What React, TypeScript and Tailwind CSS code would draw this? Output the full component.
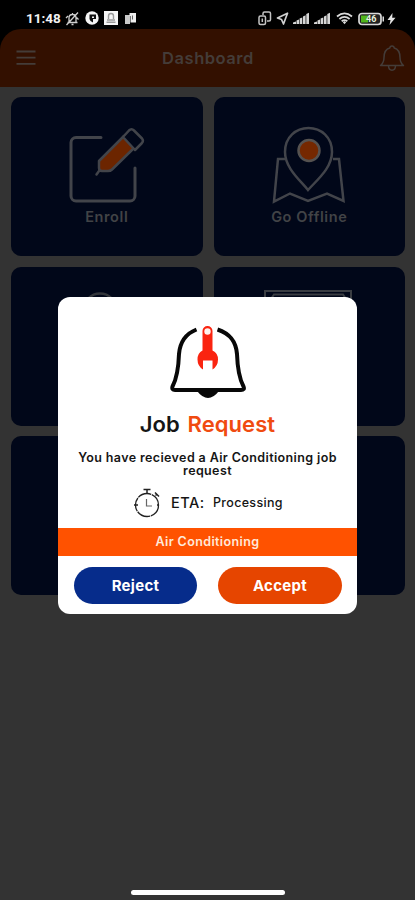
import type { ReactNode } from "react";

const Signal = () => (
    <svg width="17" height="13" viewBox="0 0 17 13" fill="#d6d6d6">
        <path d="M0 12V10.5L3 9.5V12zM3.500 12V8.500L6 7.500V12zM6.600 12V6.500L9.300 5.500V12zM10 12V4.500L12.600 3.300V12zM13.300 12V2L16 0.800V12z" />
    </svg>
)

const StatusBar = () => (
    <div className="flex h-[29px] items-end justify-between pr-[19px] pb-[3px] pl-[26px]">
        <div className="flex items-center">
            <span className="w-[35px] font-['Roboto'] text-[13.5px] leading-4 font-bold text-[#f2f2f2]">11:48</span>
            {/* muted bell */}
            <svg className="ml-[4px]" width="15" height="15" viewBox="0 0 15 15" fill="none" stroke="#cfcfcf" strokeWidth="1.3">
                <path d="M2.500 11.500h10M4 11.500V7c0-2 1.500-3.500 3.500-3.500S11 5 11 7v4.500M6.500 13.500h2M1.500 14L13 1.500M7.500 3.500V2M1 7l2-2M13.500 8.500l-2-2" />
            </svg>
            <svg className="ml-[5px]" width="14" height="14" viewBox="0 0 14 14">
                <circle cx="7" cy="7" r="6.700" fill="#f5f5f5" />
                <path d="M4.500 3.500H11V8H8v3.500A4.500 4.500 0 0 1 4.500 8z" fill="#111" />
                <path d="M7 5.500h2v1.500H7z" fill="#f5f5f5" />
            </svg>
            <svg className="ml-[5px]" width="14" height="14" viewBox="0 0 14 14">
                <path d="M0 0h14v14H0z" fill="#f5f5f5" />
                <path d="M4.500 8V5a2.500 2.500 0 0 1 5 0v3M3 9h8M2.500 11.200h9" fill="none" stroke="#999" strokeWidth="1.400" />
            </svg>
            <svg className="ml-[7px]" width="12" height="13" viewBox="0 0 12 13">
                <path d="M0 3h5v9H0z" fill="#c9c9c9" />
                <path d="M4.500 1h6.500v9.500H5.500V4h-1z" fill="#eee" />
                <path d="M7.500 3.500v4" stroke="#666" />
            </svg>
        </div>
        <div className="flex items-center">
            <svg width="14" height="15" viewBox="0 0 14 15" fill="none" stroke="#c4c4c4" strokeWidth="1.500">
                <path d="M5 4V2.500Q5 1 6.500 1H11Q12.500 1 12.500 2.500V8.500Q12.500 10 11 10H9" />
                <rect x="1" y="5" width="6.500" height="8.500" rx="1.500" />
                <path d="M4.300 7.500v3.500" />
            </svg>
            <svg className="ml-[4px]" width="13" height="13" viewBox="0 0 13 13" fill="none" stroke="#d0d0d0" strokeWidth="1.700">
                <path d="M11.500 1.200L1.500 6l4 1.500L7.500 12z" strokeLinejoin="round" />
            </svg>
            <div className="ml-[4px] flex gap-[4px]">
                <Signal />
                <Signal />
            </div>
            <svg className="ml-[5px]" width="17" height="13" viewBox="0 0 17 13" fill="none" stroke="#dadada" strokeWidth="1.800">
                <path d="M1 4.500Q8.500-1.800 16 4.500M3.400 7Q8.500 2.700 13.600 7M5.700 9.300Q8.500 7 11.300 9.300" />
                <path d="M8.500 9l-1.700 1.200 1.700 2 1.700-2z" fill="#dadada" stroke="none" />
            </svg>
            <svg className="ml-[5px]" width="27" height="14" viewBox="0 0 27 14">
                <rect x="1" y="1.500" width="22" height="11" rx="3" fill="#222" stroke="#d9d9d9" strokeWidth="1.700" />
                <path d="M3 3.500h7v7H3z" fill="#51b51c" />
                <path d="M24.500 4.500h1.500v5h-1.500z" fill="#d9d9d9" />
                <text x="8" y="10.300" fontSize="9" fontWeight="700" fill="#e9f4df" className="font-['Roboto']">46</text>
            </svg>
            <svg className="ml-[2px]" width="9" height="12" viewBox="0 0 9 12" fill="#e2e2e2">
                <path d="M5.500 0L0.500 7h3L2.500 12L8.500 4.700H5.200z" />
            </svg>
        </div>
    </div>
)

const Header = () => (
    <header className="flex h-[58px] items-center justify-between rounded-t-[21px] bg-[#331000] pr-[10px] pl-[16px]">
        <svg width="21" height="18" viewBox="0 0 21 18" stroke="#443c38" strokeWidth="1.800">
            <path d="M0.500 2.500h19M0.500 8.700h19M0.500 14.800h19" />
        </svg>
        <h1 className="text-[16.5px] font-semibold tracking-[0.53px] text-[#443c38]">Dashboard</h1>
        <svg width="26" height="28" viewBox="0 0 26 28" fill="none" stroke="#443c38" strokeWidth="1.500" strokeLinejoin="round">
            <path d="M1.500 21.500c2.500-2 3.500-4 3.500-8 0-5 2-8.500 5.800-9.500 0.300-2.700 4.100-2.700 4.400 0C19 5 21 8.500 21 13.500c0 4 1 6 3.500 8z" />
            <path d="M9.500 22c0.300 5.500 6.700 5.500 7 0" />
        </svg>
    </header>
)

const Tile = ({ label, children }: { label?: string; children?: ReactNode }) => (
    <div className="flex h-[159px] flex-col items-center overflow-hidden rounded-[10px] bg-[#010719]">
        {children}
        {label && <span className="text-[14.5px] leading-4 font-semibold tracking-[0.6px] text-[#414346]">{label}</span>}
    </div>
)

const EnrollIcon = () => (
    <svg className="mt-[28px] mr-[2px] mb-[4px] shrink-0" width="78" height="80" viewBox="0 0 78 80" fill="none" stroke="#42444a" strokeWidth="3" strokeLinejoin="round" strokeLinecap="round">
        <path d="M34 12.500H9a5 5 0 0 0-5 5V71a5 5 0 0 0 5 5h54a5 5 0 0 0 5-5V43" />
        <path d="M32 36L57 11L68 22L45 44.500Q43.500 46 41 46H35Q32 46 32 43z" fill="#6c2500" strokeWidth="2.500" />
        <path d="M56 12L62 5.500Q64.500 3 67 5.500L75 13.500Q77 16 74.500 18.500L68 25z" fill="#010719" strokeWidth="2.500" />
        <path d="M32 46L29.500 49.500" strokeWidth="2.500" />
    </svg>
)

const MapIcon = () => (
    <svg className="mt-[28px] mr-[2px] mb-[5px] shrink-0" width="74" height="79" viewBox="0 0 74 79" fill="none" stroke="#42444a" strokeWidth="2.500">
        <path d="M14 34H7L3 76.500L19 68.500L37 76L56 68.500L72.500 76L68 34H62" />
        <path d="M37 65C29 55 14 43 14 27C14 12 25 3 37.500 3C50 3 61 12 61 27C61 43 46 55 37 65z" />
        <circle cx="38" cy="25.500" r="10.500" fill="#752800" stroke="#555250" />
    </svg>
)

const BellWrench = () => (
    <svg width="76" height="74" viewBox="0 0 76 74">
        <path d="M26.500 4.500C15 9 10 17 9 29C8.500 44 7 53 2.500 61.500Q1.500 65 5 65H71Q75 65 73.500 61.500C69 53 67.500 44 67 29C66 17 61 9 47.500 4.500" fill="none" stroke="#080808" strokeWidth="4" />
        <path d="M27 66Q38 80 49 66z" fill="#080808" />
        <path d="M32.500 6a5 5 0 0 1 10 0V25.500Q48 28 48 34.500Q48 41 42.500 44.500V35.500H33V44.500Q27.500 41 27.500 34.500Q27.500 28 32.500 25.500z" fill="#fa2410" />
        <circle cx="37.500" cy="6.500" r="3.200" fill="#fff4ef" />
    </svg>
)

const Stopwatch = () => (
    <svg width="28" height="30" viewBox="0 0 28 30" fill="none" stroke="#222" strokeWidth="1.300">
        <circle cx="14" cy="17" r="11.500" strokeDasharray="14 0.700" />
        <path d="M10.500 1.500h7M14 2v4M22 4.500l4 4M22.500 7.500l1.500-1.500" strokeWidth="1.500" />
        <path d="M13.500 11v7h5.500" stroke="#666" strokeWidth="1.200" />
        <path d="M1 17h4M24 17h1" strokeWidth="1.700" />
    </svg>
)

const JobRequest = () => (
    <div className="flex h-[317px] w-[299px] flex-col items-center overflow-hidden rounded-[12px] bg-white text-[#151515]">
        <div className="mt-[28px] h-[75px]">
            <BellWrench />
        </div>
        <h2 className="mt-[11px] text-[22px] leading-[26px] font-semibold tracking-[0.08px]">
            Job <span className="ml-[2px] text-[#f04b10]">Request</span>
        </h2>
        <p className="mt-[14px] text-center text-[12.5px] leading-[13px] font-semibold tracking-[0.38px]">
            You have recieved a Air Conditioning job<br />request
        </p>
        <div className="mt-[10px] flex h-[32px] w-full items-center pl-[75px]">
            <Stopwatch />
            <span className="ml-[10px] w-[42px] text-[14.5px] font-medium tracking-[0.5px]">ETA:</span>
            <span className="text-[12.5px] font-medium tracking-[0.32px]">Processing</span>
        </div>
        <div className="mt-[9px] flex h-[28px] w-full shrink-0 items-center justify-center bg-[#ff5200] text-[12.5px] font-semibold tracking-[0.39px] text-[#ffe9d9]">
            Air Conditioning
        </div>
        <div className="mt-[11px] flex w-full justify-between pr-[15px] pl-[16px] text-[15px] font-bold tracking-[0.3px] text-white">
            <button className="h-[37px] w-[123px] rounded-full bg-[#062c8b] pt-px">Reject</button>
            <button className="h-[37px] w-[124px] rounded-full bg-[#e64500] pt-px">Accept</button>
        </div>
    </div>
)

const App = () => {
    return (
        <div className="relative h-[900px] w-[415px] overflow-hidden bg-black font-['Inter',sans-serif]">
            <StatusBar />
            <Header />
            <main className="h-[813px] bg-[#333333]">
                <div className="grid grid-cols-2 gap-x-[11px] gap-y-[10.5px] pt-[10px] pr-[10px] pl-[11px]">
                    <Tile label="Enroll"><EnrollIcon /></Tile>
                    <Tile label="Go Offline"><MapIcon /></Tile>
                    <Tile>
                        <svg className="mt-[24px] mr-[9px]" width="36" height="44" viewBox="0 0 36 44" fill="none" stroke="#33363b" strokeWidth="2.500">
                            <circle cx="16" cy="19" r="16.500" />
                        </svg>
                    </Tile>
                    <Tile>
                        <svg className="mt-[22px]" width="90" height="60" viewBox="0 0 90 60" fill="none" stroke="#3a3d42" strokeWidth="2">
                            <rect x="1" y="2" width="86" height="56" />
                            <path d="M7 10L10 5.500H79L82 10" />
                        </svg>
                    </Tile>
                    <Tile />
                    <Tile />
                </div>
            </main>
            {/* dialog over the dimmed dashboard */}
            <div className="absolute inset-0 flex flex-col items-center justify-between pt-[297px] pb-[5px]">
                <JobRequest />
                <div className="h-[5px] w-[154px] rounded-full bg-white" />
            </div>
        </div>
    )
}

export default App;
